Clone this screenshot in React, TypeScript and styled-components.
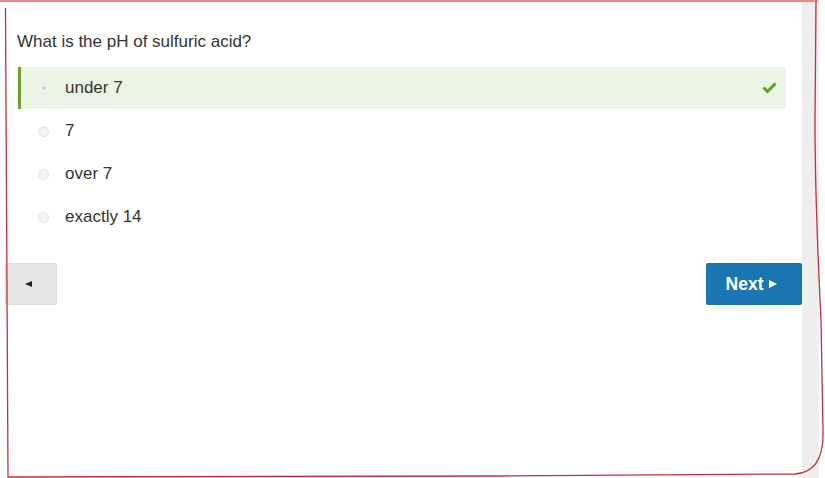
import React from "react";
import styled, { createGlobalStyle } from "styled-components";

const Global = createGlobalStyle`
  html, body { margin: 0; padding: 0; background: #fff; }
  body { font-family: "Liberation Sans", Arial, sans-serif; color: #333; }
`;

const Page = styled.div`
  position: relative;
  display: flex;
  width: 825px;
  height: 478px;
  overflow: hidden;
  background: #fff;
`;

const Main = styled.main`
  flex: 0 0 797px;
  padding-left: 5px;
  display: flex;
  flex-direction: column;
`;

const Scrollbar = styled.div`
  flex: 0 0 17px;
  background: #eeeeee;
`;

const Quiz = styled.section`
  padding: 32px 16px 0 12px;
`;

const Question = styled.p`
  margin: 0 0 15px;
  font-size: 17px;
  line-height: 20px;
  color: #333;
`;

const Answers = styled.ul`
  list-style: none;
  margin: 0;
  padding: 0 0 0 1px;
`;

const Answer = styled.li<{ $correct?: boolean }>`
  display: flex;
  align-items: center;
  height: 42px;
  margin-bottom: 1px;
  padding: 0 9px 0 17px;
  border-left: 3px solid ${(p) => (p.$correct ? "#6ba22a" : "transparent")};
  background: ${(p) => (p.$correct ? "#eaf5e4" : "transparent")};
  font-size: 17px;
  line-height: 20px;
  color: #333;
`;

const Radio = styled.span<{ $checked?: boolean }>`
  position: relative;
  flex: 0 0 auto;
  width: 11px;
  height: 11px;
  box-sizing: border-box;
  border-radius: 50%;
  border: 1px solid #e4e4e4;
  background: #f4f4f4;
  margin-right: 16px;
  &::after {
    content: "";
    display: ${(p) => (p.$checked ? "block" : "none")};
    position: absolute;
    left: 2.5px;
    top: 2.5px;
    width: 4px;
    height: 4px;
    border-radius: 50%;
    background: #d0d0d0;
  }
`;

const Label = styled.span`
  flex: 1;
`;

const Nav = styled.nav`
  display: flex;
  justify-content: space-between;
  margin-top: 24px;
`;

const PrevButton = styled.button`
  width: 52px;
  height: 42px;
  display: flex;
  align-items: center;
  justify-content: center;
  background: #e6e6e6;
  border: 1px solid #dcdcdc;
  border-radius: 2px;
  padding: 0 5px 0 0;
  cursor: pointer;
`;

const LeftTri = styled.span`
  width: 0;
  height: 0;
  border-top: 3.5px solid transparent;
  border-bottom: 3.5px solid transparent;
  border-right: 7px solid #222;
`;

const NextButton = styled.button`
  width: 96px;
  height: 42px;
  display: flex;
  align-items: center;
  justify-content: center;
  gap: 6px;
  background: #1b75b2;
  border: none;
  border-radius: 2px;
  color: #fff;
  font-family: "Liberation Sans", Arial, sans-serif;
  font-size: 17.5px;
  font-weight: bold;
  padding: 0 5px 0 0;
  cursor: pointer;
`;

const RightTri = styled.span`
  width: 0;
  height: 0;
  border-top: 4px solid transparent;
  border-bottom: 4px solid transparent;
  border-left: 8px solid #fff;
`;

const Annotation = styled.svg`
  position: absolute;
  left: 0;
  top: 0;
  pointer-events: none;
`;

const Check = () => (
  <svg width="15" height="12" viewBox="0 0 15 12">
    <polyline
      points="1.5,5.5 5.5,9.5 13.5,1.5"
      fill="none"
      stroke="#5e9f1e"
      strokeWidth="3"
    />
  </svg>
);

const answers = [
  { text: "under 7", correct: true },
  { text: "7" },
  { text: "over 7" },
  { text: "exactly 14" },
];

export default function App() {
  return (
    <>
      <Global />
      <Page>
        <Main>
          <Quiz>
            <Question>What is the pH of sulfuric acid?</Question>
            <Answers>
              {answers.map((a) => (
                <Answer key={a.text} $correct={a.correct}>
                  <Radio $checked={a.correct} />
                  <Label>{a.text}</Label>
                  {a.correct && <Check />}
                </Answer>
              ))}
            </Answers>
          </Quiz>
          <Nav>
            <PrevButton aria-label="Previous">
              <LeftTri />
            </PrevButton>
            <NextButton>
              Next <RightTri />
            </NextButton>
          </Nav>
        </Main>
        <Scrollbar />
        <Annotation width="825" height="478" viewBox="0 0 825 478">
          <rect x="0" y="0" width="818" height="2" fill="#f0868a" />
          <path
            d="M 816 1 L 815 120 C 815 200, 818 260, 821 320 L 823 430 C 824 460, 814 473, 795 474 C 700 475, 600 476, 500 476 C 350 477, 200 476, 8 477 L 5.5 8"
            fill="none"
            stroke="#c4303c"
            strokeWidth="1.3"
          />
        </Annotation>
      </Page>
    </>
  );
}
